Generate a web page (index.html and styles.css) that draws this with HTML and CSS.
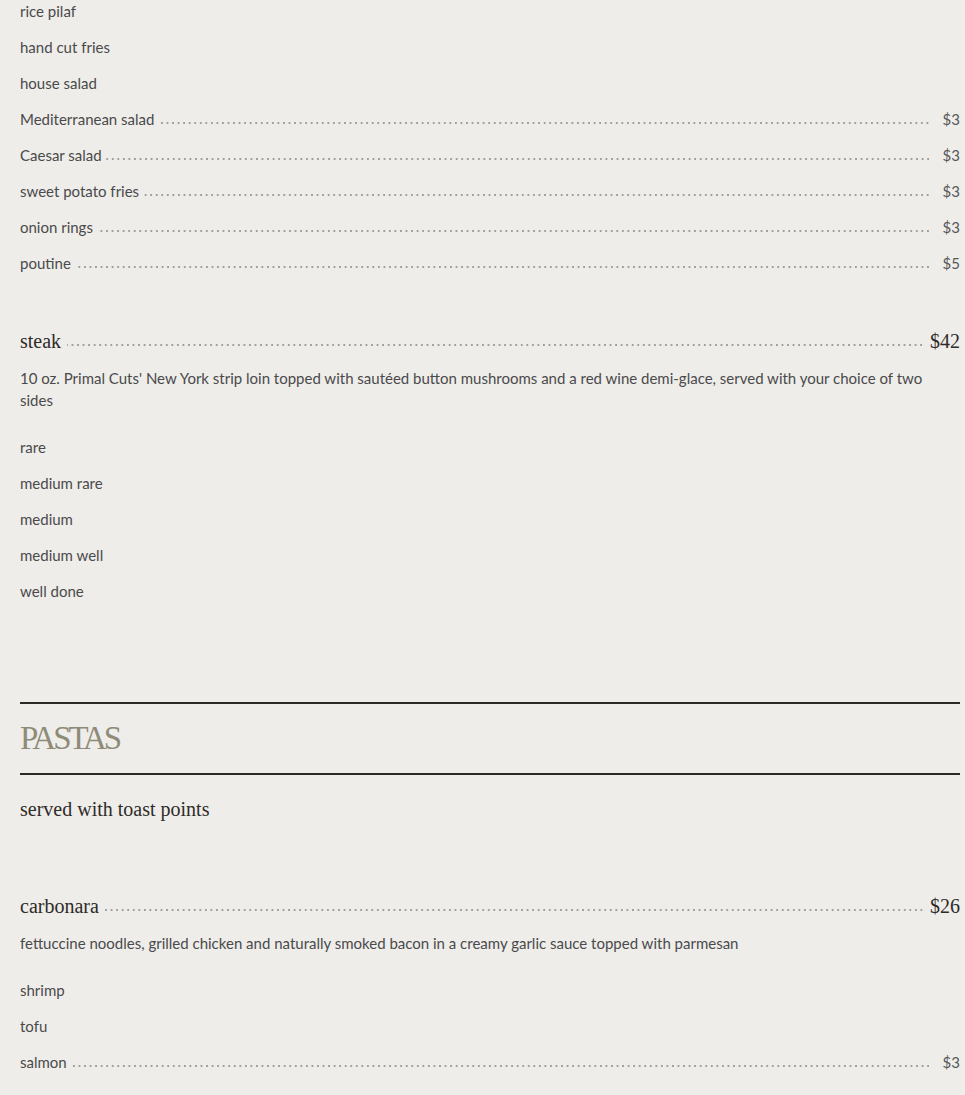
FILE: index.html
```html
<!DOCTYPE html>
<html lang="en">
<head>
<meta charset="utf-8">
<title>Menu</title>
<link rel="stylesheet" href="styles.css">
</head>
<body>
<main class="menu">
  <ul class="options options-first">
    <li class="row"><span class="name">rice pilaf</span></li>
    <li class="row"><span class="name">hand cut fries</span></li>
    <li class="row"><span class="name">house salad</span></li>
    <li class="row"><span class="name">Mediterranean salad</span><span class="leader"></span><span class="price">$3</span></li>
    <li class="row"><span class="name">Caesar salad</span><span class="leader"></span><span class="price">$3</span></li>
    <li class="row"><span class="name">sweet potato fries</span><span class="leader"></span><span class="price">$3</span></li>
    <li class="row"><span class="name">onion rings</span><span class="leader"></span><span class="price">$3</span></li>
    <li class="row"><span class="name">poutine</span><span class="leader"></span><span class="price">$5</span></li>
  </ul>

  <article class="item item-steak">
    <div class="item-head"><span class="item-name">steak</span><span class="leader leader-lg"></span><span class="item-price">$42</span></div>
    <p class="desc">10 oz. Primal Cuts' New York strip loin topped with sautéed button mushrooms and a red wine demi-glace, served with your choice of two sides</p>
    <ul class="options">
      <li class="row"><span class="name">rare</span></li>
      <li class="row"><span class="name">medium rare</span></li>
      <li class="row"><span class="name">medium</span></li>
      <li class="row"><span class="name">medium well</span></li>
      <li class="row"><span class="name">well done</span></li>
    </ul>
  </article>

  <section class="section">
    <header class="section-header"><h2 class="section-title">PASTAS</h2></header>
    <p class="section-note">served with toast points</p>

    <article class="item item-carbonara">
      <div class="item-head"><span class="item-name">carbonara</span><span class="leader leader-lg"></span><span class="item-price">$26</span></div>
      <p class="desc">fettuccine noodles, grilled chicken and naturally smoked bacon in a creamy garlic sauce topped with parmesan</p>
      <ul class="options">
        <li class="row"><span class="name">shrimp</span></li>
        <li class="row"><span class="name">tofu</span></li>
        <li class="row"><span class="name">salmon</span><span class="leader"></span><span class="price">$3</span></li>
      </ul>
    </article>
  </section>
</main>
</body>
</html>
```

FILE: styles.css
```css
html, body {
  margin: 0;
  padding: 0;
  background: #eeedea;
}

body {
  font-family: "Lato", "Open Sans", sans-serif;
  color: #4a4a4a;
  font-size: 15px;
}

.menu {
  padding: 0 5px 0 20px;
}

.options {
  list-style: none;
  margin: 0;
  padding: 0;
}

.row {
  display: flex;
  align-items: baseline;
  line-height: 22px;
  margin-bottom: 14px;
}

.name {
  white-space: nowrap;
}

.leader {
  flex: 1;
  height: 4px;
  margin: 0 12px 0 4px;
  background-image: radial-gradient(circle at center, #a19f9b 0, #a19f9b 0.8px, rgba(161, 159, 155, 0) 1.3px);
  background-size: 5.55px 4px;
  background-repeat: repeat-x;
  background-position: right bottom;
}

.price {
  color: #585858;
  white-space: nowrap;
}

.item-steak {
  margin-top: 52px;
}

.item-head {
  display: flex;
  align-items: baseline;
  font-family: "Liberation Serif", "Times New Roman", serif;
  font-size: 20px;
  line-height: 30px;
  color: #2e2b28;
}

.leader-lg {
  margin: 0 6px 0 6px;
  background-position: right 0 bottom 1px;
}

.item-price {
  white-space: nowrap;
}

.desc {
  margin: 11px 0 25px;
  line-height: 22px;
  padding-right: 20px;
}

.section {
  margin-top: 100px;
}

.section-header {
  border-top: 2px solid #2b2926;
  border-bottom: 2px solid #2b2926;
}

.section-title {
  margin: 0;
  font-family: "Liberation Serif", "Times New Roman", serif;
  font-weight: normal;
  font-size: 33px;
  letter-spacing: -3px;
  line-height: 69px;
  color: #8e8b78;
}

.section-note {
  margin: 19px 0 0;
  font-family: "Liberation Serif", "Times New Roman", serif;
  font-size: 20px;
  line-height: 30px;
  color: #2e2b28;
}

.item-carbonara {
  margin-top: 67px;
}
```
